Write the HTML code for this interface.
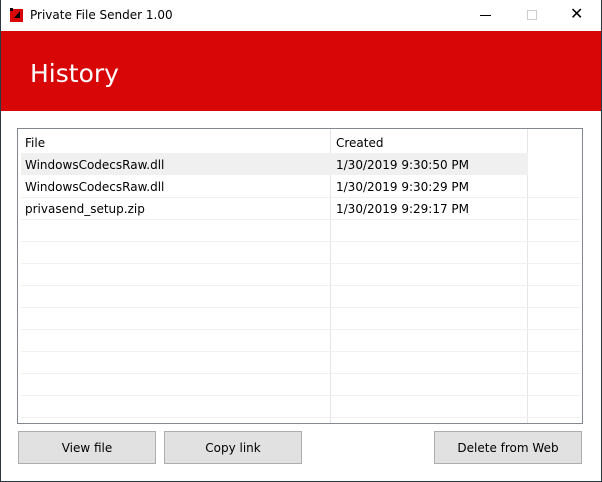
<!DOCTYPE html><html><head><style>
*{margin:0;padding:0;box-sizing:border-box}
body{width:602px;height:482px;position:relative;background:#fff;font-family:"DejaVu Sans","Liberation Sans",sans-serif;font-size:12px;color:#000;overflow:hidden}
.abs{position:absolute}
.btn{position:absolute;top:431px;height:33px;background:#e1e1e1;border:1px solid #adadad;text-align:center;line-height:32px;font-size:12px}
.hl{position:absolute;left:3px;width:560px;height:1px;background:#f0f0f0}
.cell{position:absolute;line-height:22px;top:1px}
</style></head><body>
<div class="abs" style="left:0;top:0;width:602px;height:31px;background:#fff"></div>
<div class="abs" style="left:10px;top:9px;width:13px;height:13px;background:#d80606"></div>
<div class="abs" style="left:10px;top:8px;width:3px;height:3px;background:#000"></div>
<div class="abs" style="left:14px;top:11px;width:0;height:0;border-left:6px solid transparent;border-bottom:7px solid #000"></div>
<div class="abs" style="left:30px;top:8px;font-size:12px">Private File Sender 1.00</div>
<div class="abs" style="left:480px;top:15px;width:11px;height:1px;background:#000"></div>
<div class="abs" style="left:527px;top:10px;width:10px;height:10px;border:1px solid #ccc"></div>
<div class="abs" style="left:570px;top:4px;font-size:16px;font-family:'DejaVu Sans';font-weight:300">✕</div>
<div class="abs" style="left:0;top:31px;width:602px;height:80px;background:#d80606"></div>
<div class="abs" style="left:30px;top:59px;color:#fff;font-size:25px">History</div>
<div class="abs" style="left:17px;top:128px;width:566px;height:296px;border:1px solid #828790">
 <div class="abs" style="left:312px;top:0;width:1px;height:294px;background:#e5e5e5"></div>
 <div class="abs" style="left:509px;top:0;width:1px;height:294px;background:#e5e5e5"></div>
 <div class="abs" style="left:3px;top:24px;width:507px;height:22px;background:#f0f0f0"></div>
 <div class="cell" style="left:7px;top:3px">File</div>
 <div class="cell" style="left:318px;top:3px">Created</div>
 <div class="cell" style="left:7px;top:25px">WindowsCodecsRaw.dll</div>
 <div class="cell" style="left:318px;top:25px">1/30/2019 9:30:50 PM</div>
 <div class="cell" style="left:7px;top:47px">WindowsCodecsRaw.dll</div>
 <div class="cell" style="left:318px;top:47px">1/30/2019 9:30:29 PM</div>
 <div class="cell" style="left:7px;top:69px">privasend_setup.zip</div>
 <div class="cell" style="left:318px;top:69px">1/30/2019 9:29:17 PM</div>
 <div class="hl" style="top:68px"></div><div class="hl" style="top:90px"></div><div class="hl" style="top:112px"></div>
 <div class="hl" style="top:134px"></div><div class="hl" style="top:156px"></div><div class="hl" style="top:178px"></div>
 <div class="hl" style="top:200px"></div><div class="hl" style="top:222px"></div><div class="hl" style="top:244px"></div>
 <div class="hl" style="top:266px"></div><div class="hl" style="top:288px"></div>
</div>
<div class="btn" style="left:18px;width:138px">View file</div>
<div class="btn" style="left:164px;width:138px">Copy link</div>
<div class="btn" style="left:434px;width:148px">Delete from Web</div>
<div class="abs" style="left:0;top:0;width:602px;height:482px;border:1px solid #2b3a42;border-top:none;pointer-events:none"></div>
</body></html>
